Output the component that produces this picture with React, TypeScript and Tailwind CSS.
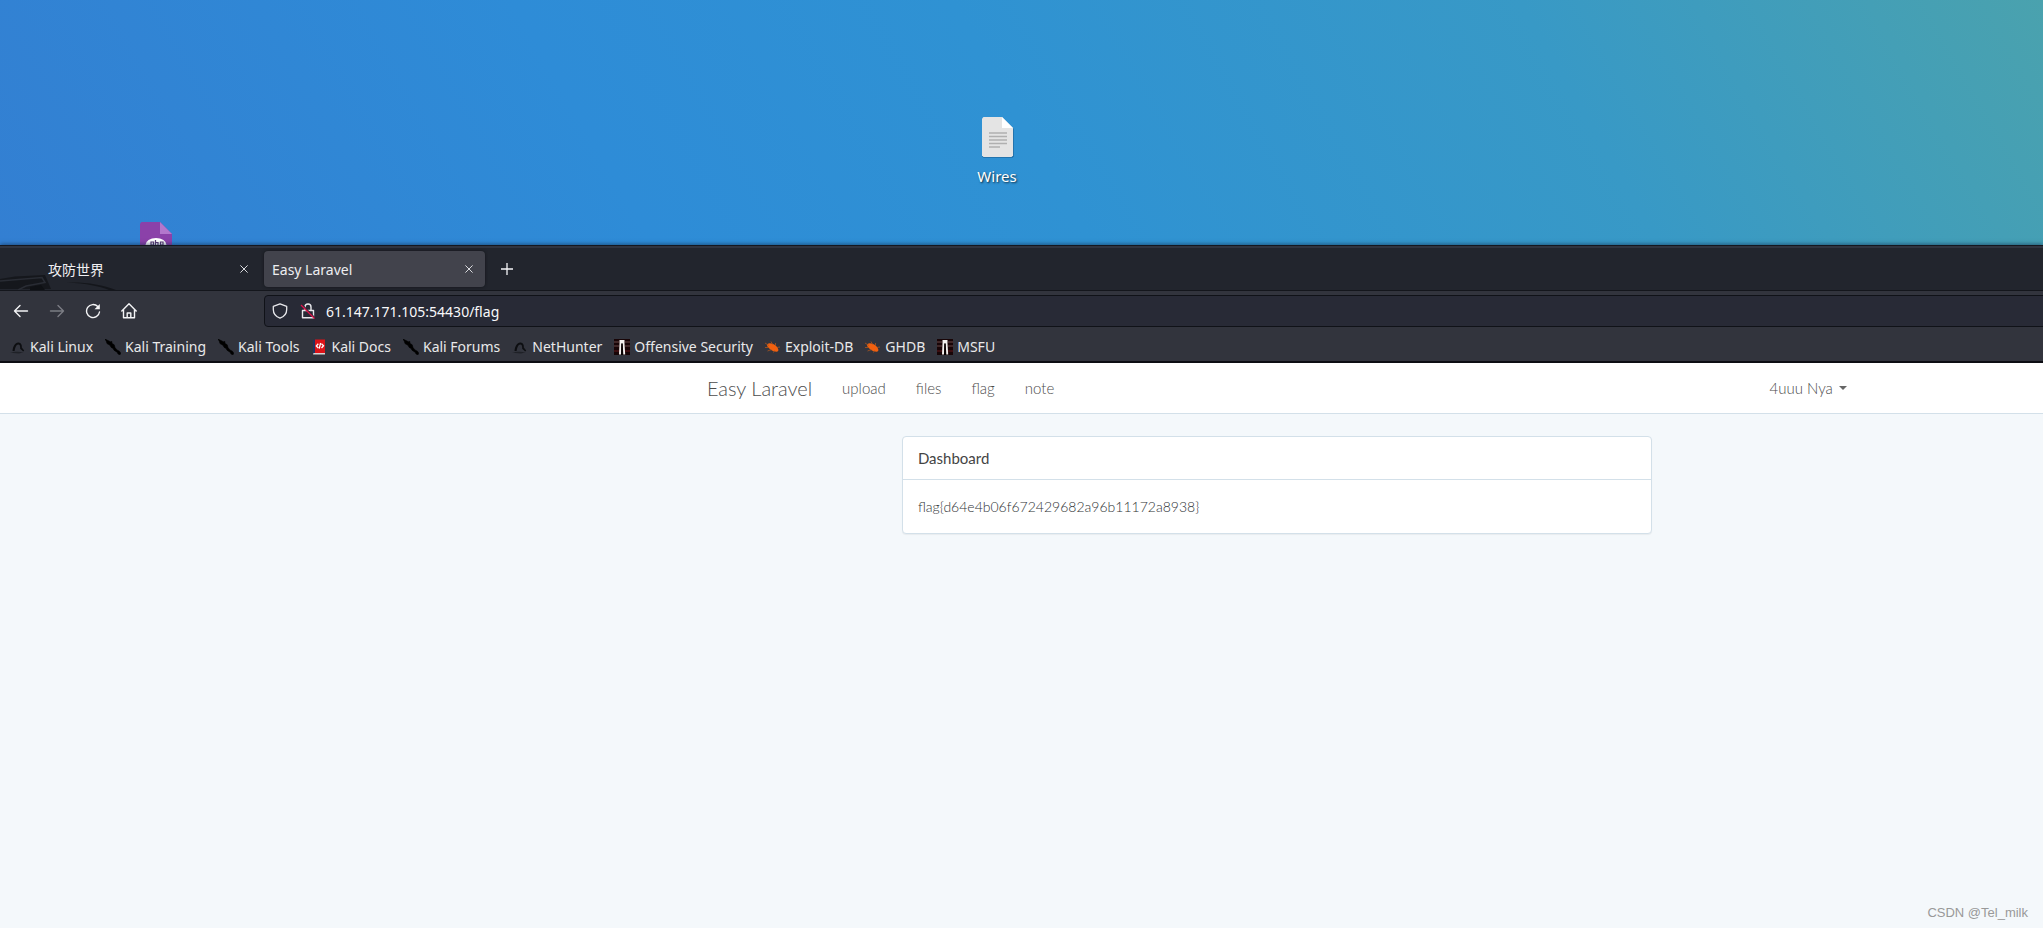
import type { ReactNode } from "react";

const uiFont = "font-['Noto_Sans','Noto_Sans_CJK_SC',sans-serif]";

function DragonIcon() {
  return (
    <svg viewBox="0 0 16 16" className="size-4 shrink-0" aria-hidden="true">
      <path d="M2.500 12C3 7 5.400 3.200 8.600 3.600c2.600.2 3.600 2.600 3.200 5l2.400 3-1 .8-3-2.600C10.400 6.500 9.600 5.300 8.200 5.400 6.200 5.600 5.200 8.500 4.600 12z" fill="#0d0e11" />
      <path d="M0 13.800C3 12.600 9 12.300 13.500 13.300L9 14.600z" fill="#1f2127" />
    </svg>
  );
}

function BladeIcon() {
  return (
    <svg viewBox="0 0 16 16" className="size-4 shrink-0" aria-hidden="true">
      <path d="M0 0l3 1.600 2.500 1.200 1.300-.4.200 2 2.200 1.400.8 2.800 2 2.400 2.400 1.200 1.400 2-.8 1.600-2-.8-.6-1.600L9 11.200l-.8-1.800-2-1L5 6.200 2 4.600 1.400 2.400z" fill="#000" stroke="#000" strokeWidth=".6" />
    </svg>
  );
}

function DocsIcon() {
  return (
    <svg viewBox="0 0 16 16" className="size-4 shrink-0" aria-hidden="true">
      <path d="M2 1l3-.6v14L2 15z" fill="#23335f" />
      <path d="M4 .5h10v13.500H4z" fill="#dc1318" />
      <path d="M2.500 14h11.500v1.500h-12z" fill="#d7d3d3" />
      <path d="M7.300 4.700L5.300 7l2 2M10.500 4.700l2 2-2 2.300M9.600 4L8.200 9.700" fill="none" stroke="#fff" strokeWidth="1.300" />
    </svg>
  );
}

function TowerIcon() {
  return (
    <svg viewBox="0 0 16 16" className="size-4 shrink-0" aria-hidden="true">
      <path d="M0 0h16v16H0z" fill="#180507" />
      <path d="M0 3h5M11 3h5M0 7h5M11 7h5" stroke="#6a4a4b" strokeWidth="1.200" />
      <path d="M0 12h5M11 12h5" stroke="#3c0e11" strokeWidth="2" />
      <path d="M5.500 1h5v3.500l.7 11H9.300L8.700 5H7.300L7 15.500H5L5.500 4.500z" fill="#f4f0ee" />
      <path d="M7.500 4h1l.3 12H7.200z" fill="#050202" />
    </svg>
  );
}

function BugIcon() {
  return (
    <svg viewBox="0 0 16 16" className="size-4 shrink-0" aria-hidden="true">
      <path d="M2.500 5C4 3.500 8 4.500 10.500 6.500s3.500 4.500 2.600 5.600-4.600.4-7-1.200S1 6.800 2.500 5z" fill="#f2600f" />
      <path d="M0 4l4 2.500M0 8.500h4M2.500 12l4-1.500M6 2.500l1.500 3M10.500 4v3M8.500 13.500l1-2M12 8.500l3-.5" stroke="#a9551f" strokeWidth=".8" />
    </svg>
  );
}

const bookmarks: { label: string; icon: ReactNode }[] = [
  { label: "Kali Linux", icon: <DragonIcon /> },
  { label: "Kali Training", icon: <BladeIcon /> },
  { label: "Kali Tools", icon: <BladeIcon /> },
  { label: "Kali Docs", icon: <DocsIcon /> },
  { label: "Kali Forums", icon: <BladeIcon /> },
  { label: "NetHunter", icon: <DragonIcon /> },
  { label: "Offensive Security", icon: <TowerIcon /> },
  { label: "Exploit-DB", icon: <BugIcon /> },
  { label: "GHDB", icon: <BugIcon /> },
  { label: "MSFU", icon: <TowerIcon /> },
];

function CloseIcon() {
  return (
    <svg viewBox="0 0 8 8" className="size-2" fill="none" stroke="#d9dade" strokeWidth="1" aria-hidden="true">
      <path d="M.4.4l7.200 7.200M7.600.4L.4 7.600" />
    </svg>
  );
}

function Desktop() {
  return (
    <section className="relative h-[245px] overflow-hidden bg-[linear-gradient(60deg,#337fd2_0%,#2e8cd7_30%,#2f92d3_50%,#3899c6_76%,#4aa2ae_100%)]">
      <div className="absolute left-[957px] top-[117px] flex w-20 flex-col items-center">
        <svg viewBox="0 0 32 41" className="ml-px h-[41px] w-8" aria-hidden="true">
          <path d="M1.500 1H20l12 11v27.500L30.500 41h-29L0 39.500v-37z" fill="#1c6096" opacity=".6" />
          <path d="M1.500 0H20l11 11v27.500L29.500 40h-28L0 38.500v-37z" fill="#e4e4e4" />
          <path d="M20 0l11 11H20z" fill="#fff" />
          <path d="M7 16h18M7 19.500h18M7 23h18M7 26.500h18M7 30h11" stroke="#b0b0b0" strokeWidth="1.500" />
        </svg>
        <span className={`${uiFont} mt-2 text-[15px] leading-5 text-white [text-shadow:1px_1px_2px_#000000b0]`}>Wires</span>
      </div>
      <svg viewBox="0 0 32 24" className="absolute left-[140px] top-[222px] h-6 w-8" aria-label="php file" role="img">
        <path d="M1.500 0H20l12 12v12H0V1.500z" fill="#8b41a9" />
        <path d="M20 0l12 12H20z" fill="#b377cc" />
        <ellipse cx="16" cy="23" rx="10.500" ry="7" fill="#fff" />
        <path d="M11 25v-5h2.500v3H11M15.500 18v6M15.500 20.500h2.500V24M20.500 25v-5H23v3h-2.500" fill="none" stroke="#5b3a75" strokeWidth="1.200" />
      </svg>
    </section>
  );
}

function TabStrip() {
  return (
    <div className="relative flex h-[43px] items-center border-b border-[#14161c] bg-[#22252d]">
      <svg viewBox="0 0 120 15" className="absolute bottom-0 left-0 h-[15px] w-[120px]" aria-hidden="true">
        <path d="M0 4L15 1.500 45 0l6 14H0z" fill="#15171c" />
        <path d="M0 6l42-3.500 3 5L26 11 18 15" fill="none" stroke="#292c34" strokeWidth="1.500" />
        <path d="M30 12l11-2 4 5H30z" fill="#0f1115" />
        <path d="M67 7.500c20-.5 35 2 49 7.500h-7C99 11 87 8.500 67 7.500z" fill="#14161b" />
      </svg>
      <div className="relative flex w-[264px] items-center pl-12 pr-3">
        <button type="button" className="flex-1 pt-px text-left text-sm leading-5 text-[#f0f0f2]">攻防世界</button>
        <button type="button" aria-label="Close tab" className="p-1"><CloseIcon /></button>
      </div>
      <div className="flex h-9 w-[221px] items-center rounded bg-[#42434c] pl-2 pr-2 shadow-[0_0_3px_#111318]">
        <button type="button" className="flex-1 pt-px text-left text-sm leading-5 text-[#ededf0]">Easy Laravel</button>
        <button type="button" aria-label="Close tab" className="p-1"><CloseIcon /></button>
      </div>
      <button type="button" aria-label="New tab" className="ml-3 p-1">
        <svg viewBox="0 0 12 12" className="size-3" stroke="#f5f5f7" strokeWidth="1.300" aria-hidden="true">
          <path d="M6 0v12M0 6h12" />
        </svg>
      </button>
    </div>
  );
}

function Toolbar() {
  return (
    <div className="flex items-center pt-1">
      <div className="flex w-[264px] gap-5 pl-[13px] text-[#f4f4f6]">
        <button type="button" aria-label="Back">
          <svg viewBox="0 0 16 16" className="size-4" fill="none" stroke="currentColor" strokeWidth="1.400" strokeLinecap="round" strokeLinejoin="round" aria-hidden="true">
            <path d="M14.500 8H1.500M7 2.500L1.500 8 7 13.500" />
          </svg>
        </button>
        <button type="button" aria-label="Forward" className="text-[#7b7d84]">
          <svg viewBox="0 0 16 16" className="size-4" fill="none" stroke="currentColor" strokeWidth="1.400" strokeLinecap="round" strokeLinejoin="round" aria-hidden="true">
            <path d="M1.500 8h13M9 2.500L14.500 8 9 13.500" />
          </svg>
        </button>
        <button type="button" aria-label="Reload">
          <svg viewBox="0 0 16 16" className="size-4" fill="none" stroke="currentColor" strokeWidth="1.400" strokeLinecap="round" aria-hidden="true">
            <path d="M12.800 3.600A6.500 6.500 0 1 0 14.500 9" />
            <path d="M14.800 1v5.300H9.500z" fill="currentColor" stroke="none" />
          </svg>
        </button>
        <button type="button" aria-label="Home">
          <svg viewBox="0 0 16 16" className="size-4" fill="none" stroke="currentColor" strokeWidth="1.400" strokeLinecap="round" strokeLinejoin="round" aria-hidden="true">
            <path d="M.8 8L8 .8 15.200 8M2.500 6.500v8.200h11V6.500M6.200 14.500V10h3.600v4.500" />
          </svg>
        </button>
      </div>
      <div className="-mr-2 flex h-8 flex-1 items-center rounded border border-[#101218] bg-[#282a36] pl-[7px]">
        <svg viewBox="0 0 16 16" className="size-4 shrink-0" fill="none" stroke="#e8e8ec" strokeWidth="1.300" strokeLinejoin="round" aria-hidden="true">
          <path d="M8 .8l6.700 2.600v3.200c0 4-2.800 7.200-6.700 8.600-3.900-1.400-6.700-4.600-6.700-8.600V3.400z" />
        </svg>
        <svg viewBox="0 0 16 16" className="ml-3 size-4 shrink-0" fill="none" aria-hidden="true">
          <path d="M2.500 7.500h11v7.200h-11zM5 7.500V4a3 3 0 0 1 6 0v3.500" stroke="#e8e8ec" strokeWidth="1.400" strokeLinejoin="round" />
          <path d="M2 1.500L15 15" stroke="#282a36" strokeWidth="1.200" />
          <path d="M1 2L14.500 15.500" stroke="#e2124a" strokeWidth="1.300" />
        </svg>
        <input
          type="text"
          aria-label="Address"
          defaultValue="61.147.171.105:54430/flag"
          className="ml-[10px] min-w-0 flex-1 bg-transparent pt-px text-sm leading-5 text-[#f9f9fb] outline-none"
        />
      </div>
    </div>
  );
}

function Browser() {
  return (
    <header className={`${uiFont} relative h-[118px] shrink-0 overflow-hidden border-b-2 border-[#0c0d13] bg-[#32343d] shadow-[0_-1px_4px_#0f2c4a99]`}>
      <div className="h-[3px] border-t border-[#14171f] bg-[#30343f]" />
      <TabStrip />
      <Toolbar />
      <nav aria-label="Bookmarks" className="flex items-center gap-3 pl-[10px] pt-[10px]">
        {bookmarks.map((b) => (
          <a key={b.label} href="#" className="flex items-center gap-1 whitespace-nowrap text-sm leading-5 text-[#e9e9ea]">
            {b.icon}
            {b.label}
          </a>
        ))}
      </nav>
    </header>
  );
}

function Page() {
  return (
    <main className="relative flex-1 overflow-hidden bg-[#f4f8fb] font-['Lato',sans-serif] text-[15px]">
      <div className="w-[125%]">
        <nav className="border-b border-[#d3e0e9] bg-white text-[#4c4c4c]">
          <div className="mx-auto flex h-[50px] w-[1170px] items-center px-[15px] font-light">
            <a href="#" className="mr-[30px] text-xl leading-5">Easy Laravel</a>
            <div className="flex gap-[30px]">
              <a href="#">upload</a>
              <a href="#">files</a>
              <a href="#">flag</a>
              <a href="#">note</a>
            </div>
            <button type="button" className="ml-auto flex items-center gap-[6px]">
              4uuu Nya
              <svg viewBox="0 0 8 4" className="h-1 w-2" fill="#666" aria-hidden="true"><path d="M0 0h8L4 4z" /></svg>
            </button>
          </div>
        </nav>
        <section className="mx-auto mt-[22px] w-[750px] rounded border border-[#d3e0e9] bg-white shadow-[0_1px_1px_#0000000d]">
          <h1 className="border-b border-[#d3e0e9] px-[15px] py-[10px] leading-[22px] text-[#444]">Dashboard</h1>
          <p className="px-[15px] pb-[15px] pt-4 text-sm leading-[22px] font-light text-[#303436]">flag{"{"}d64e4b06f672429682a96b11172a8938{"}"}</p>
        </section>
      </div>
      <p className="absolute bottom-[5px] right-[15px] font-['Liberation_Sans',sans-serif] text-[13px] leading-5 text-[#999]">CSDN @Tel_milk</p>
    </main>
  );
}

export default function App() {
  return (
    <div className="flex min-h-screen flex-col overflow-hidden">
      <Desktop />
      <Browser />
      <Page />
    </div>
  );
}
